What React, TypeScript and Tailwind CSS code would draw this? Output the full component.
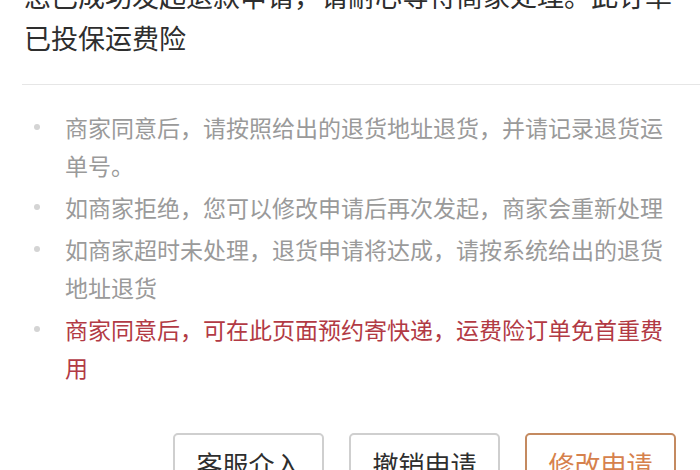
const notes = [
  { text: "商家同意后，请按照给出的退货地址退货，并请记录退货运单号。", red: false },
  { text: "如商家拒绝，您可以修改申请后再次发起，商家会重新处理", red: false },
  { text: "如商家超时未处理，退货申请将达成，请按系统给出的退货地址退货", red: false },
  { text: "商家同意后，可在此页面预约寄快递，运费险订单免首重费用", red: true },
];

export default function App() {
  return (
    <div
      className="h-[470px] w-[700px] overflow-hidden bg-white"
      style={{ fontFamily: '"Noto Sans CJK SC", "Noto Sans", sans-serif' }}
    >
      <div className="ml-[22px] border-b border-[#e6e6e6] pb-[25px]">
        <p className="-mt-[25px] pl-[2px] pr-[26px] text-[27px] leading-[42px] text-[#2e2e2e]">
          您已成功发起退款申请，请耐心等待商家处理。此订单已投保运费险
        </p>
      </div>

      <ul className="mt-[23px] flex flex-col gap-[4px] pr-[25px]">
        {notes.map((n) => (
          <li key={n.text} className="flex">
            <div className="flex h-[38px] w-[65px] shrink-0 items-center pl-[34px]">
              <span className="h-[6px] w-[6px] rounded-full bg-[#d4d4d4]" />
            </div>
            <p
              className={
                n.red
                  ? "text-[23px] leading-[38px] text-[#b23a44]"
                  : "text-[23px] leading-[38px] text-[#9a9a9a]"
              }
            >
              {n.text}
            </p>
          </li>
        ))}
      </ul>

      <div className="mt-[47px] flex justify-end gap-[25px] pr-[24px]">
        <button className="h-[60px] w-[151px] rounded-[5px] border-2 border-[#cfcfcf] bg-white text-[26px] text-[#2e2e2e]">
          客服介入
        </button>
        <button className="h-[60px] w-[151px] rounded-[5px] border-2 border-[#cfcfcf] bg-white text-[26px] text-[#2e2e2e]">
          撤销申请
        </button>
        <button className="h-[60px] w-[151px] rounded-[5px] border-2 border-[#c48a60] bg-white text-[26px] text-[#d6814c]">
          修改申请
        </button>
      </div>
    </div>
  );
}
